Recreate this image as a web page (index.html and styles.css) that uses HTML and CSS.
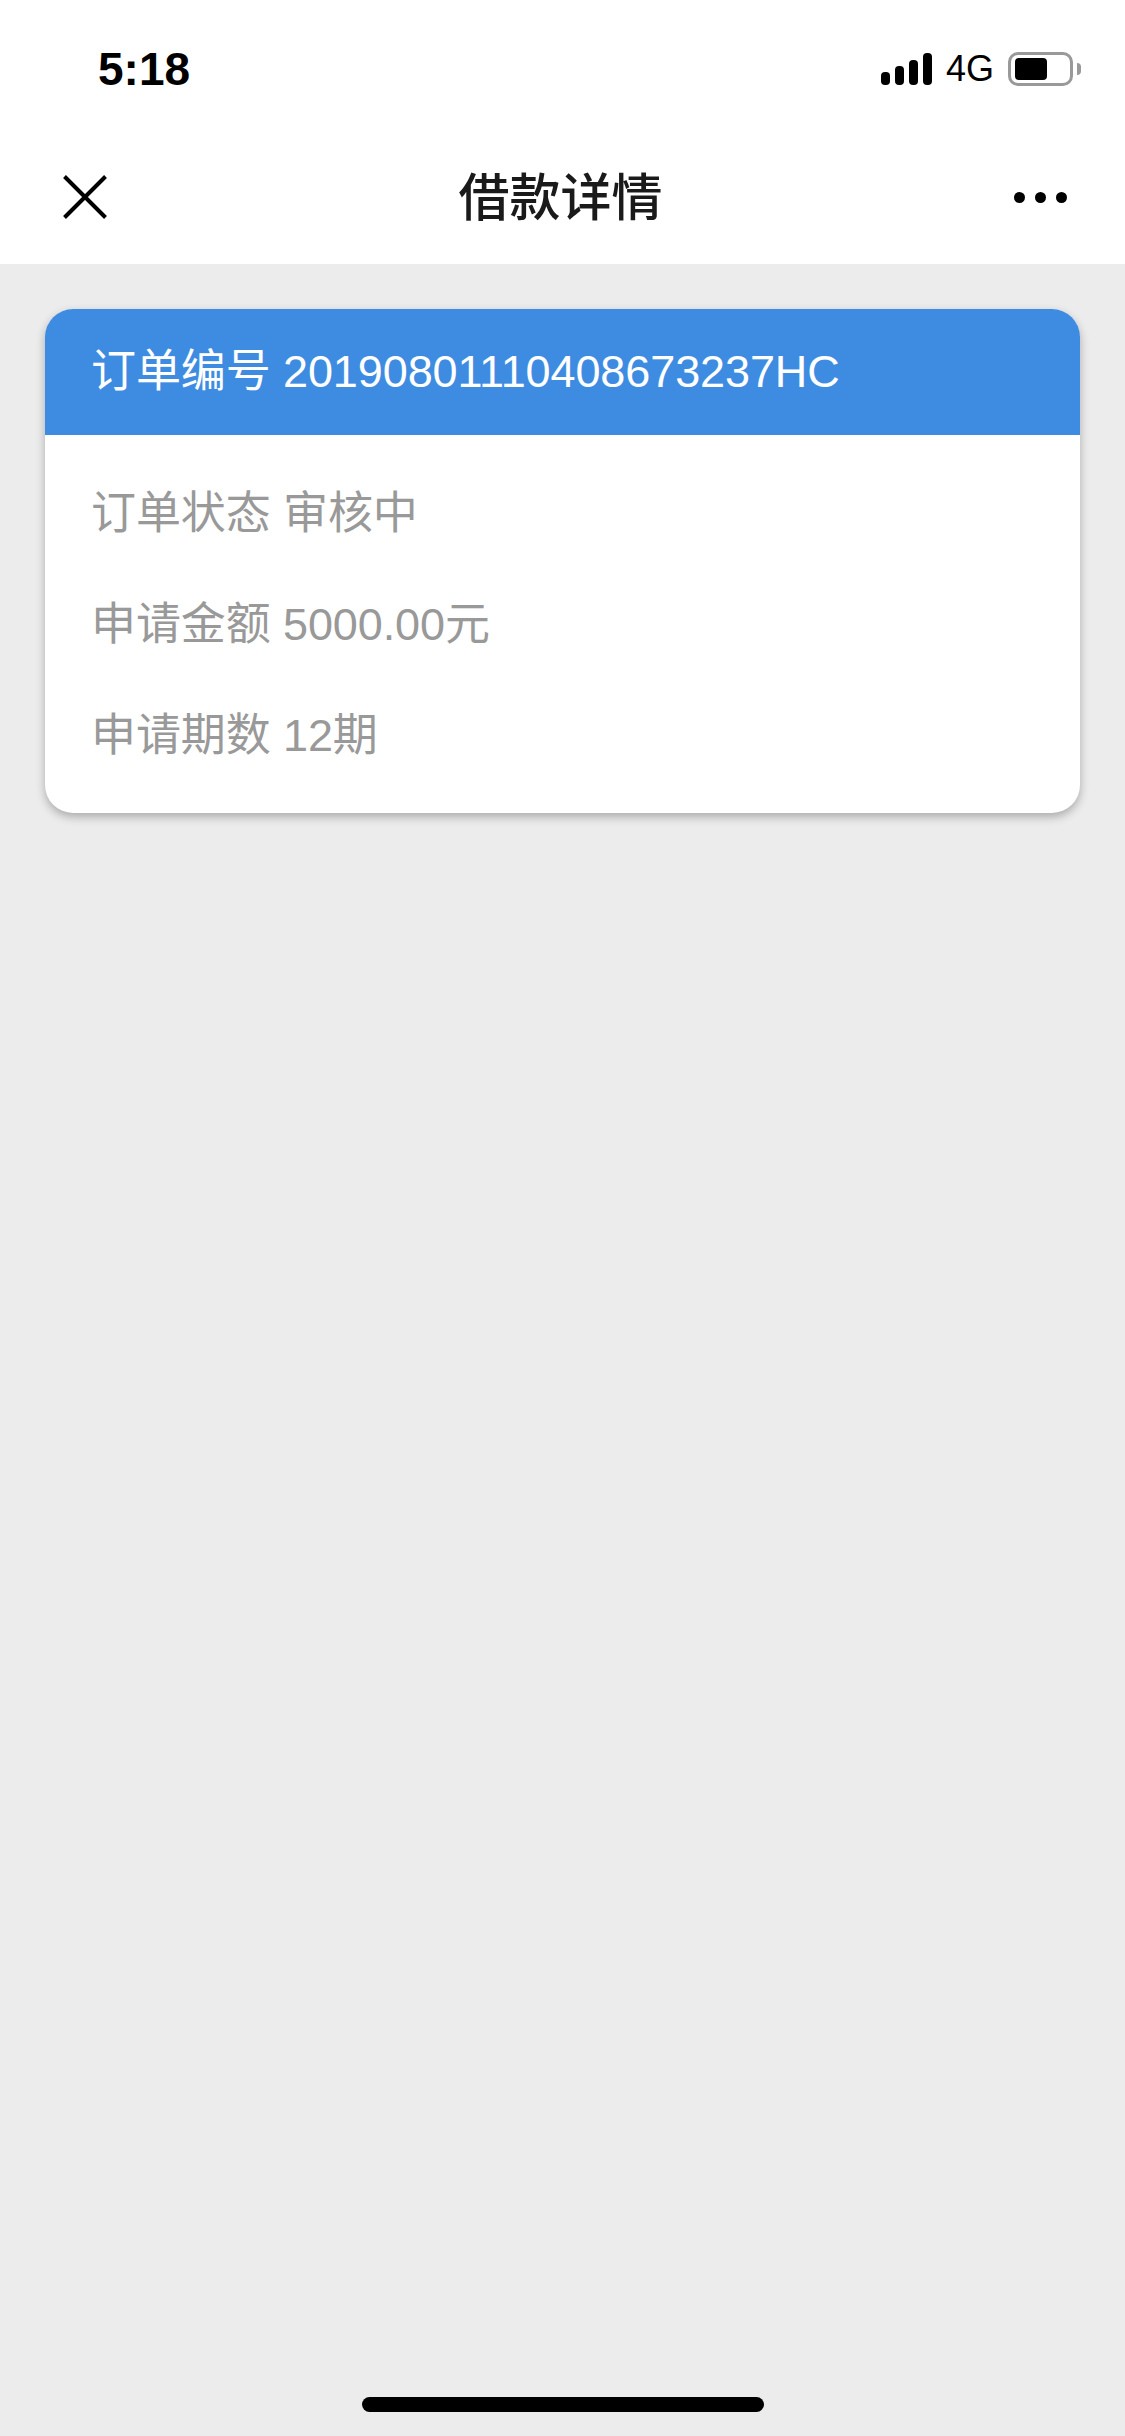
FILE: index.html

```html
<!DOCTYPE html>
<html lang="zh-CN">
<head>
<meta charset="utf-8"/>
<meta content="width=device-width, initial-scale=1.0" name="viewport"/>
<title>借款详情</title>
<link rel="stylesheet" href="styles.css">
</head>
<body>
<div class="page">
  <div class="top-area">
    <div class="status-bar">
      <span class="time">5:18</span>
      <div class="status-right">
        <div class="signal">
          <span class="bar bar-1"></span>
          <span class="bar bar-2"></span>
          <span class="bar bar-3"></span>
          <span class="bar bar-4"></span>
        </div>
        <span class="network">4G</span>
        <div class="battery"><span class="battery-fill"></span></div>
        <span class="battery-nub"></span>
      </div>
    </div>
    <div class="nav-bar">
      <svg class="icon-close" viewBox="0 0 44 44" width="44" height="44">
        <path d="M1.5 1.5 L42.5 42.5 M42.5 1.5 L1.5 42.5" stroke="#000" stroke-width="4" fill="none"/>
      </svg>
      <h1 class="nav-title">借款详情</h1>
      <div class="more">
        <span class="dot"></span>
        <span class="dot"></span>
        <span class="dot"></span>
      </div>
    </div>
  </div>
  <div class="content">
    <div class="card">
      <div class="card-header">订单编号 20190801110408673237HC</div>
      <div class="card-body">
        <p class="row">订单状态 审核中</p>
        <p class="row">申请金额 5000.00元</p>
        <p class="row">申请期数 12期</p>
      </div>
    </div>
  </div>
  <div class="home-bar"></div>
</div>
</body>
</html>
```

FILE: styles.css

```css
* {
  margin: 0;
  padding: 0;
  box-sizing: border-box;
}
body {
  font-family: "Liberation Sans", "Noto Sans CJK SC", sans-serif;
  background: #ececec;
}
.page {
  display: flex;
  flex-direction: column;
  height: 2436px;
  overflow: hidden;
}
.top-area {
  background: white;
  height: 264px;
}
.status-bar {
  display: flex;
  justify-content: space-between;
  align-items: center;
  height: 138px;
  padding: 0 44px 0 98px;
}
.time {
  font-size: 46px;
  font-weight: bold;
  color: #000;
}
.status-right {
  display: flex;
  align-items: center;
}
.signal {
  display: flex;
  align-items: flex-end;
  gap: 5px;
  height: 32px;
  margin-right: 14px;
}
.bar {
  width: 9px;
  background: #000;
  border-radius: 4px;
}
.bar-1 { height: 13px; }
.bar-2 { height: 19px; }
.bar-3 { height: 25px; }
.bar-4 { height: 32px; }
.network {
  font-size: 36px;
  color: #000;
  margin-right: 14px;
}
.battery {
  width: 65px;
  height: 34px;
  padding: 3px 4px;
  border: 3px solid #999;
  border-radius: 10px;
}
.battery-fill {
  display: block;
  width: 32px;
  height: 100%;
  background: #000;
  border-radius: 4px;
}
.battery-nub {
  width: 4px;
  height: 12px;
  margin-left: 4px;
  background: #999;
  border-radius: 0 4px 4px 0;
}
.nav-bar {
  display: grid;
  grid-template-columns: 1fr auto 1fr;
  align-items: center;
  height: 118px;
  padding: 0 58px 0 63px;
}
.nav-title {
  font-size: 51px;
  font-weight: 500;
  line-height: 1;
  color: #1a1a1a;
  margin: 2px 9px 0 0;
}
.more {
  display: flex;
  justify-content: flex-end;
  gap: 10px;
}
.dot {
  width: 11px;
  height: 11px;
  background: #000;
  border-radius: 50%;
}
.content {
  padding: 45px 45px 0;
}
.card {
  background: white;
  border-radius: 28px;
  overflow: hidden;
  box-shadow: 0 4px 10px rgba(0,0,0,0.28);
}
.card-header {
  height: 126px;
  line-height: 126px;
  padding-left: 46px;
  background: #3e8ce2;
  color: white;
  font-size: 45px;
  letter-spacing: -0.1px;
}
.card-body {
  padding: 24px 0 21px 46px;
}
.row {
  height: 111px;
  line-height: 110px;
  font-size: 45px;
  letter-spacing: -0.1px;
  color: #999;
}
.home-bar {
  width: 402px;
  height: 15px;
  margin: auto auto 24px;
  background: #000;
  border-radius: 8px;
}
```
